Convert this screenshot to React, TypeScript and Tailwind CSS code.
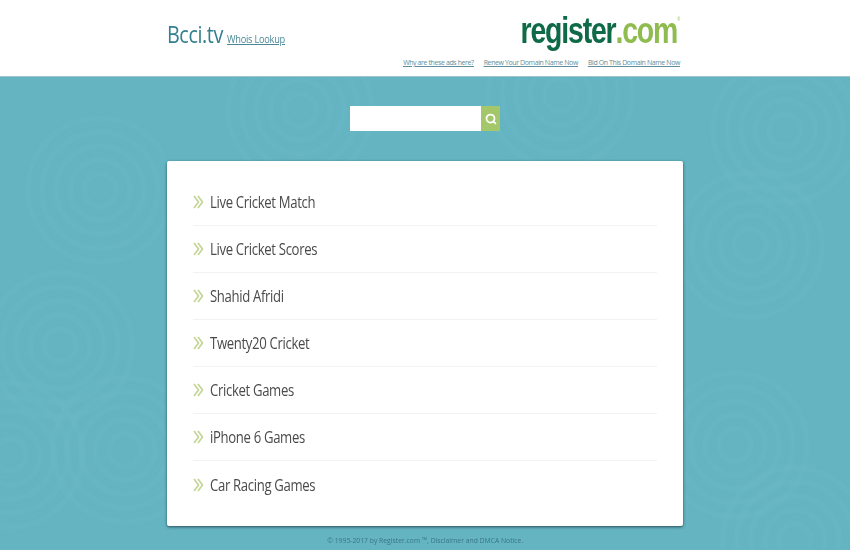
import React from 'react';
import { Search } from 'lucide-react';

const links = [
  'Live Cricket Match',
  'Live Cricket Scores',
  'Shahid Afridi',
  'Twenty20 Cricket',
  'Cricket Games',
  'iPhone 6 Games',
  'Car Racing Games',
];

// centres of the faint concentric swirls in the background, in page coordinates
const swirls = [
  [100, 190], [300, 110], [750, 245], [785, 130], [735, 445], [795, 540], [125, 450], [10, 455], [60, 345], [560, 95],
];

const Pattern = () => (
  <svg className="absolute inset-0 w-full h-full blur-[1px]" viewBox="0 77 850 473" fill="none">
    {swirls.map(([cx, cy], i) => (
      <g key={i} stroke="#74becd" strokeWidth="6" opacity="0.2">
        {[16, 30, 44, 58, 72].map(r => (
          <circle key={r} cx={cx} cy={cy} r={r} />
        ))}
      </g>
    ))}
  </svg>
);

const Chevrons = () => (
  <svg width="11" height="14" viewBox="0 0 11 14" fill="none" stroke="#c4d696" strokeWidth="1.7" className="shrink-0">
    <path d="M1 1l4.5 6L1 13" />
    <path d="M5 1l4.5 6L5 13" />
  </svg>
);

export default function App() {
  return (
    <div className="w-[850px] h-[550px] overflow-hidden bg-[#64b4c2] flex flex-col font-['Open_Sans',sans-serif]">
      {/* Header */}
      <header className="h-[77px] shrink-0 bg-white border-b border-[#9cc4cc] flex justify-between pl-[167px] pr-[170px] relative z-10">
        <div className="flex items-baseline gap-[4px] pt-[18px] h-fit">
          <span className="w-[56px] text-[23px] leading-[32px] text-[#35808f] tracking-[-0.5px] origin-left scale-x-[0.86] whitespace-nowrap">Bcci.tv</span>
          <a className="w-[58px] text-[11px] text-[#4b8795] underline tracking-[-0.3px] origin-left scale-x-[0.84] whitespace-nowrap">Whois Lookup</a>
        </div>
        <div className="flex flex-col items-end">
          <div className="relative mt-[10px] mr-[3px] h-[42px] text-[36px] leading-[42px] font-bold tracking-[-1.5px] font-['Liberation_Sans',sans-serif] flex origin-right scale-x-[0.79] whitespace-nowrap">
            <span className="text-[#0f6a48]">register</span>
            <span className="text-[#8fbc4f]">.com</span>
            <span className="absolute right-[-4px] top-[6px] text-[5px] leading-[6px] font-normal tracking-normal text-[#8fbc4f]">®</span>
          </div>
          <div className="mt-[6px] flex gap-[10px] text-[7px] leading-[10px] text-[#5d8f9c] underline tracking-[-0.4px] whitespace-nowrap">
            <a>Why are these ads here?</a>
            <a>Renew Your Domain Name Now</a>
            <a>Bid On This Domain Name Now</a>
          </div>
        </div>
      </header>

      {/* Body */}
      <main className="relative flex-1 flex flex-col items-center">
        <Pattern />
        <div className="relative mt-[29px] flex h-[25px] w-[150px]">
          <div className="w-[131px] bg-white" />
          <button className="w-[19px] bg-[#a3c769] flex items-center justify-center">
            <Search size={12} strokeWidth={3.5} className="text-white" />
          </button>
        </div>

        <section className="relative mt-[30px] w-[516px] h-[365px] bg-white rounded-[2px] shadow-[0_1px_3px_rgba(30,60,70,0.85)] px-[26px] pt-[18px]">
          {links.map((name, i) => (
            <div
              key={name}
              className={`h-[47px] flex items-center gap-[6px] ${i < links.length - 1 ? 'border-b border-[#f2f2f2]' : ''}`}
            >
              <Chevrons />
              <a className="text-[16px] font-medium text-[#4a4a4a] tracking-[-0.4px] origin-left scale-x-[0.82] whitespace-nowrap">{name}</a>
            </div>
          ))}
        </section>

        <footer className="relative mt-[9px] text-[8px] leading-[10px] text-[#3a7686] scale-x-[0.85] whitespace-nowrap">
          © 1995-2017 by Register.com ™, Disclaimer and DMCA Notice.
        </footer>
      </main>
    </div>
  );
}
